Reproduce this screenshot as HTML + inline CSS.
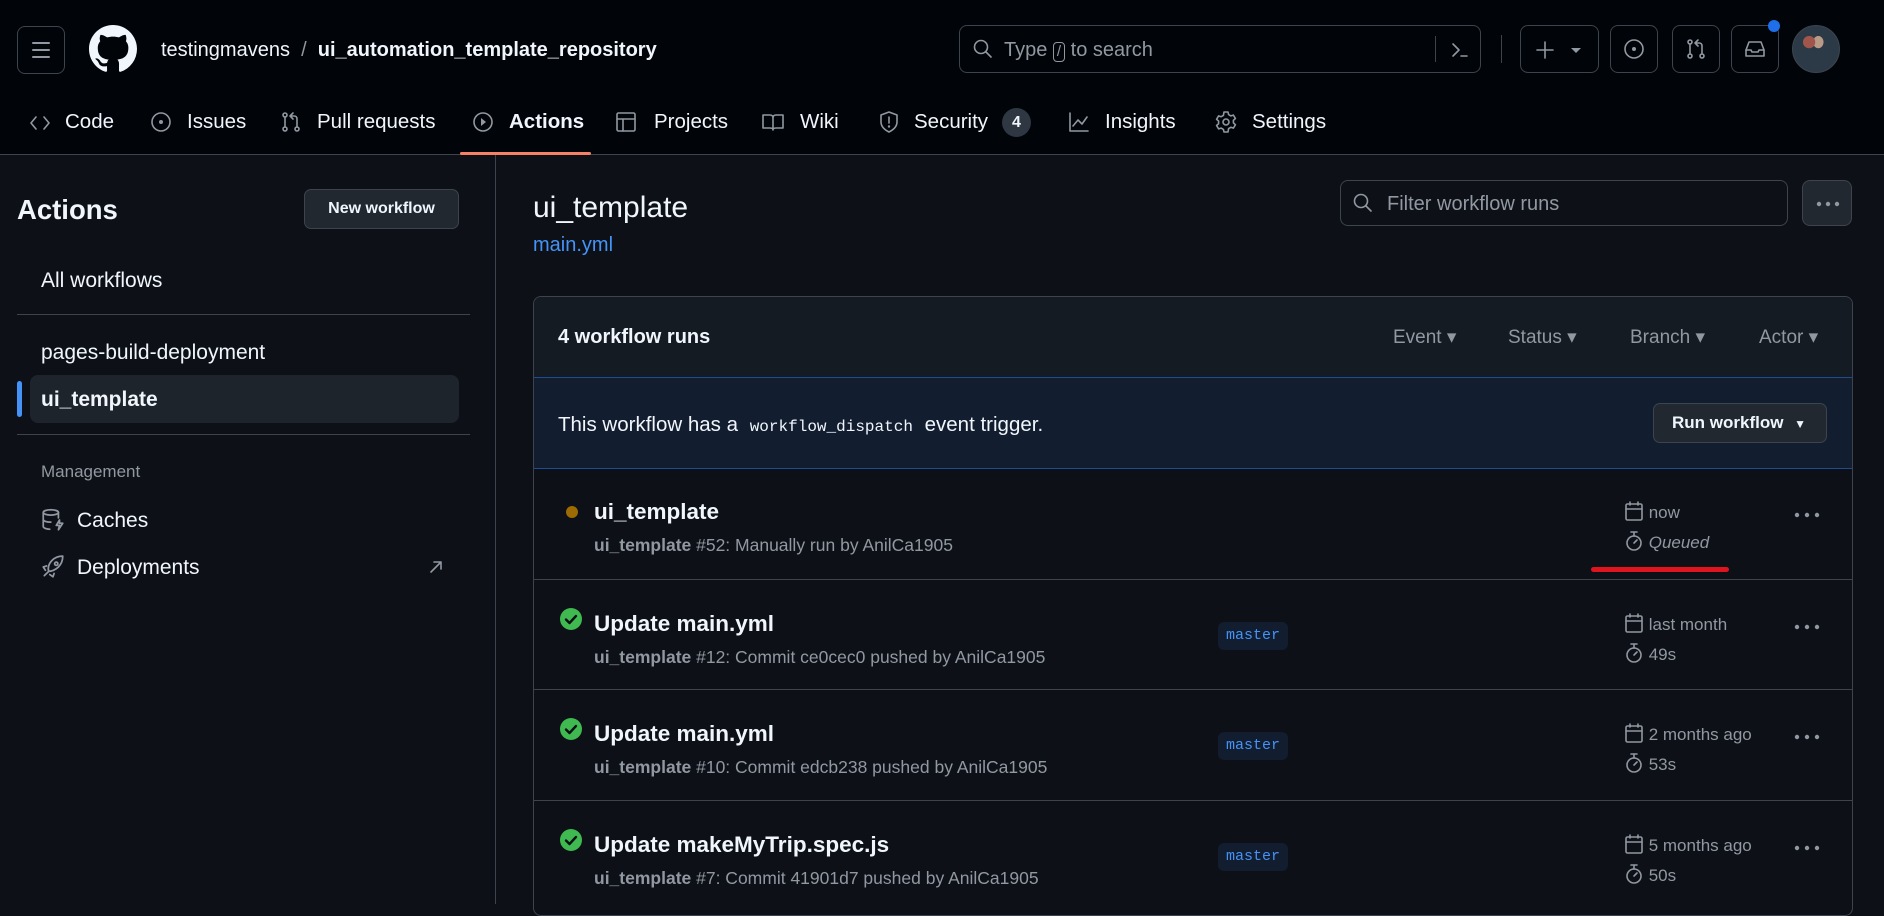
<!DOCTYPE html>
<html><head><meta charset="utf-8">
<style>
*{box-sizing:border-box;margin:0;padding:0}
body{width:1884px;height:904px;overflow:hidden;background:#0d1117;color:#f0f6fc;font-family:"Liberation Sans",sans-serif;font-size:17px;position:relative}
.abs{position:absolute}
.hdr{position:absolute;left:0;top:0;width:1884px;height:155px;background:#010409;border-bottom:1px solid #3d444d}
.btn{position:absolute;border:1px solid #3d444d;border-radius:8px}
svg{display:block}
.ic{fill:none;stroke:#9198a1;stroke-width:1.6;stroke-linecap:round;stroke-linejoin:round}
.nav{position:absolute;top:110px;font-size:20.5px;color:#f0f6fc;line-height:24px}
.mut{color:#9198a1}
.side{position:absolute;left:0;top:155px;width:496px;height:749px;border-right:1px solid #3d444d}
.box{position:absolute;left:533px;top:296px;width:1320px;height:620px;border:1px solid #3d444d;border-radius:8px;overflow:hidden}
.row{position:absolute;left:0;width:1320px;height:111px;border-top:1px solid #3d444d}
.t{position:absolute;left:60px;top:31px;font-size:22.5px;font-weight:bold}
.s{position:absolute;left:60px;top:67px;font-size:17.5px;color:#9198a1}
.master{position:absolute;left:684px;top:42px;height:28px;padding:0 8px;background:#121d2f;color:#4493f8;border-radius:6px;font-family:"Liberation Mono",monospace;font-size:15px;line-height:28px}
.meta{position:absolute;left:1090px;font-size:17px;color:#9198a1}
.dots{position:absolute;left:1260px;top:44px}
.filt{font-size:19px;color:#9198a1;position:absolute}
.sd{position:absolute;font-size:21px}
</style></head><body>
<div class="hdr"></div>
<div class="btn" style="left:17px;top:26px;width:48px;height:48px">
<svg width="46" height="46" viewBox="0 0 46 46"><path d="M15 16h16M15 23h16M15 30h16" stroke="#9198a1" stroke-width="2" stroke-linecap="round"/></svg></div>
<svg class="abs" style="left:89px;top:25px" width="48" height="48" viewBox="0 0 16 16"><path fill="#f0f6fc" d="M8 0C3.58 0 0 3.58 0 8c0 3.54 2.29 6.530 5.47 7.59.4.07.55-.17.55-.38 0-.19-.01-.82-.01-1.49-2.01.37-2.530-.49-2.690-.94-.09-.23-.48-.94-.82-1.13-.28-.15-.68-.52-.01-.53.63-.01 1.08.58 1.23.82.72 1.21 1.87.87 2.33.66.07-.52.28-.87.51-1.070-1.78-.2-3.64-.89-3.64-3.95 0-.87.31-1.59.82-2.15-.08-.2-.36-1.02.08-2.12 0 0 .67-.21 2.2.82.64-.18 1.32-.27 2-.27.68 0 1.36.09 2 .27 1.53-1.04 2.2-.82 2.2-.82.44 1.1.16 1.92.08 2.12.51.56.82 1.27.82 2.15 0 3.07-1.87 3.75-3.65 3.95.29.25.54.73.54 1.48 0 1.07-.01 1.93-.01 2.2 0 .21.15.46.55.38A8.013 8.013 0 0016 8c0-4.42-3.58-8-8-8z"/></svg>
<div class="abs" style="left:161px;top:38px;font-size:20px;line-height:24px">testingmavens <span class="mut">&nbsp;/&nbsp;</span> <b style="font-weight:600">ui_automation_template_repository</b></div>
<div class="btn" style="left:959px;top:25px;width:522px;height:48px">
<svg class="abs" style="left:12px;top:12px" width="22" height="22" viewBox="0 0 22 22"><circle cx="9" cy="9" r="6.5" class="ic" stroke-width="2"/><path d="M14 14l5 5" class="ic" stroke-width="2"/></svg>
<div class="abs mut" style="left:44px;top:13px;font-size:20px">Type <span style="display:inline-block;border:1px solid #9198a1;border-radius:4px;padding:0 3px;font-size:15px;line-height:18px">/</span> to search</div>
<div class="abs" style="left:475px;top:10px;width:1px;height:26px;background:#3d444d"></div>
<svg class="abs" style="left:488px;top:12px" width="24" height="24" viewBox="0 0 24 24"><path d="M5 6l6 6-6 6M13 18h6" class="ic" stroke-width="2"/></svg>
</div>
<div class="abs" style="left:1501px;top:35px;width:1px;height:28px;background:#3d444d"></div>
<div class="btn" style="left:1520px;top:25px;width:79px;height:48px">
<svg class="abs" style="left:12px;top:12px" width="60" height="24" viewBox="0 0 60 24"><path d="M12 4v16M4 12h16" class="ic" stroke-width="2"/><path d="M38 10h10l-5 5z" fill="#9198a1"/></svg></div>
<div class="btn" style="left:1610px;top:25px;width:48px;height:48px">
<svg class="abs" style="left:11px;top:11px" width="24" height="24" viewBox="0 0 24 24"><circle cx="12" cy="12" r="9" class="ic" stroke-width="2"/><circle cx="12" cy="12" r="2" fill="#9198a1"/></svg></div>
<div class="btn" style="left:1672px;top:25px;width:48px;height:48px">
<svg class="abs" style="left:11px;top:11px" width="24" height="24" viewBox="0 0 24 24"><g class="ic" stroke-width="2"><circle cx="6" cy="5" r="2"/><circle cx="6" cy="19" r="2"/><circle cx="18" cy="19" r="2"/><path d="M6 7v10M18 17V9c0-2-1-3-3-3h-3M14 3l-3 3 3 3"/></g></svg></div>
<div class="btn" style="left:1731px;top:25px;width:48px;height:48px">
<svg class="abs" style="left:11px;top:11px" width="24" height="24" viewBox="0 0 24 24"><g class="ic" stroke-width="2"><path d="M3 13l3-8h12l3 8v6H3z"/><path d="M3 13h5l1 2h6l1-2h5"/></g></svg></div>
<div class="abs" style="left:1768px;top:20px;width:12px;height:12px;border-radius:50%;background:#1f6feb"></div>
<div class="abs" style="left:1792px;top:25px;width:48px;height:48px;border-radius:50%;background:radial-gradient(circle at 35% 35%,#a0564a 0 14%,transparent 15%),radial-gradient(ellipse at 55% 35%,#b89a86 0 14%,#2c3a48 15% 100%);border:1px solid #3d444d"></div>

<svg class="abs" style="left:29px;top:112px" width="22" height="22" viewBox="0 0 22 22"><path d="M7 5l-5 6 5 6M15 5l5 6-5 6" class="ic"/></svg>
<div class="nav" style="left:65px">Code</div>
<svg class="abs" style="left:149px;top:110px" width="24" height="24" viewBox="0 0 24 24"><circle cx="12" cy="12" r="9" class="ic"/><circle cx="12" cy="12" r="2" fill="#9198a1"/></svg>
<div class="nav" style="left:187px">Issues</div>
<svg class="abs" style="left:279px;top:110px" width="24" height="24" viewBox="0 0 24 24"><g class="ic"><circle cx="6" cy="5" r="2"/><circle cx="6" cy="19" r="2"/><circle cx="18" cy="19" r="2"/><path d="M6 7v10M18 17V9c0-2-1-3-3-3h-3M14 3l-3 3 3 3"/></g></svg>
<div class="nav" style="left:317px">Pull requests</div>
<svg class="abs" style="left:471px;top:110px" width="24" height="24" viewBox="0 0 24 24"><circle cx="12" cy="12" r="9" class="ic"/><path d="M10 8l5 4-5 4z" fill="#9198a1"/></svg>
<div class="nav" style="left:509px;font-weight:bold">Actions</div>
<div class="abs" style="left:460px;top:152px;width:131px;height:3px;background:#f78166;border-radius:2px"></div>
<svg class="abs" style="left:614px;top:110px" width="24" height="24" viewBox="0 0 24 24"><g class="ic"><rect x="3" y="3" width="18" height="18" rx="1.5"/><path d="M3 9h18M9 9v12"/></g></svg>
<div class="nav" style="left:654px">Projects</div>
<svg class="abs" style="left:761px;top:110px" width="24" height="24" viewBox="0 0 24 24"><g class="ic"><path d="M2 5h7c2 0 3 1 3 3v12c0-1.5-1-2-3-2H2zM22 5h-7c-2 0-3 1-3 3v12c0-1.5 1-2 3-2h7z"/></g></svg>
<div class="nav" style="left:800px">Wiki</div>
<svg class="abs" style="left:877px;top:110px" width="24" height="24" viewBox="0 0 24 24"><g class="ic"><path d="M12 2l8 3v7c0 5-4 8-8 10-4-2-8-5-8-10V5z"/><path d="M12 7v6"/></g><circle cx="12" cy="16.5" r="1.2" fill="#9198a1"/></svg>
<div class="nav" style="left:914px">Security</div>
<div class="abs" style="left:1002px;top:108px;width:29px;height:29px;border-radius:15px;background:#2f3742;font-size:16px;text-align:center;line-height:29px;font-weight:bold">4</div>
<svg class="abs" style="left:1067px;top:110px" width="24" height="24" viewBox="0 0 24 24"><g class="ic"><path d="M3 3v18h18M6 16l5-6 4 4 5-7"/></g></svg>
<div class="nav" style="left:1105px">Insights</div>
<svg class="abs" style="left:1214px;top:110px" width="24" height="24" viewBox="0 0 24 24"><g class="ic"><circle cx="12" cy="12" r="3"/><path d="M10 2h4l.6 2.6 2.3 1.3 2.5-.8 2 3.4-2 1.8v2.6l2 1.8-2 3.4-2.5-.8-2.3 1.3L14 22h-4l-.6-2.6-2.3-1.3-2.5.8-2-3.4 2-1.8v-2.6l-2-1.8 2-3.4 2.5.8 2.3-1.3z"/></g></svg>
<div class="nav" style="left:1252px">Settings</div>

<div class="side"></div>
<div class="abs" style="left:17px;top:194px;font-size:27.5px;font-weight:bold">Actions</div>
<div class="btn" style="left:304px;top:189px;width:155px;height:40px;background:#212830;font-size:16px;font-weight:bold;text-align:center;line-height:38px;border-radius:7px">New workflow</div>
<div class="sd" style="left:41px;top:269px">All workflows</div>
<div class="abs" style="left:17px;top:314px;width:453px;height:1px;background:#3d444d"></div>
<div class="sd" style="left:41px;top:341px">pages-build-deployment</div>
<div class="abs" style="left:30px;top:375px;width:429px;height:48px;background:#1e242c;border-radius:8px"></div>
<div class="abs" style="left:17px;top:381px;width:5px;height:36px;background:#4493f8;border-radius:3px"></div>
<div class="sd" style="left:41px;top:388px;font-weight:bold">ui_template</div>
<div class="abs" style="left:17px;top:434px;width:453px;height:1px;background:#3d444d"></div>
<div class="abs mut" style="left:41px;top:462px;font-size:17px">Management</div>
<svg class="abs" style="left:40px;top:507px" width="26" height="26" viewBox="0 0 24 24"><g class="ic"><ellipse cx="10" cy="5" rx="7" ry="2.5"/><path d="M3 5v13c0 1.4 3 2.5 6 2.5M17 5v5M3 11.5c0 1.4 3 2.5 7 2.5"/><path d="M18 12l-3 5h3l-1 4 4-6h-3z"/></g></svg>
<div class="sd" style="left:77px;top:509px">Caches</div>
<svg class="abs" style="left:40px;top:554px" width="26" height="26" viewBox="0 0 24 24"><g class="ic"><path d="M8 16c-1-3 0-7 3-10 3-3 7-4 10-4 0 3-1 7-4 10-3 3-7 4-9 4z"/><path d="M8 16l-4 4M6 11l-3 1 2 3M13 18l-1 3-3-2"/><circle cx="15" cy="9" r="1.5"/></g></svg>
<div class="sd" style="left:77px;top:556px">Deployments</div>
<svg class="abs" style="left:427px;top:558px" width="18" height="18" viewBox="0 0 18 18"><path d="M4 14L14 4M7 4h7v7" class="ic" stroke-width="1.8"/></svg>

<div class="abs" style="left:533px;top:191px;font-size:30px">ui_template</div>
<div class="abs" style="left:533px;top:234px;font-size:20px;color:#4493f8">main.yml</div>
<div class="btn" style="left:1340px;top:180px;width:448px;height:46px;background:#0d1117">
<svg class="abs" style="left:11px;top:11px" width="22" height="22" viewBox="0 0 22 22"><circle cx="9" cy="9" r="6.5" class="ic" stroke-width="2"/><path d="M14 14l5 5" class="ic" stroke-width="2"/></svg>
<div class="abs mut" style="left:46px;top:12px;font-size:20px">Filter workflow runs</div></div>
<div class="btn" style="left:1802px;top:180px;width:50px;height:46px;background:#212830">
<svg class="abs" style="left:13px;top:20px" width="24" height="6"><circle cx="3" cy="3" r="2.2" fill="#9198a1"/><circle cx="12" cy="3" r="2.2" fill="#9198a1"/><circle cx="21" cy="3" r="2.2" fill="#9198a1"/></svg></div>

<div class="box">
<div class="abs" style="left:0;top:0;width:1320px;height:80px;background:#151b23"></div>
<div class="abs" style="left:24px;top:29px;font-size:20px;font-weight:bold">4 workflow runs</div>
<div class="filt" style="left:859px;top:29px">Event ▾</div>
<div class="filt" style="left:974px;top:29px">Status ▾</div>
<div class="filt" style="left:1096px;top:29px">Branch ▾</div>
<div class="filt" style="left:1225px;top:29px">Actor ▾</div>
<div class="abs" style="left:0;top:80px;width:1320px;height:92px;background:#121d2f;border-top:1px solid #1f4b8f;border-bottom:1px solid #1f4b8f"></div>
<div class="abs" style="left:24px;top:116px;font-size:20.5px">This workflow has a <span style="font-family:'Liberation Mono',monospace;font-size:16px;padding:0 6px">workflow_dispatch</span> event trigger.</div>
<div class="btn" style="left:1119px;top:106px;width:174px;height:40px;background:#212830;font-size:17px;font-weight:bold;line-height:38px;padding-left:18px;border-radius:7px">Run workflow <span style="font-size:12px;margin-left:6px">▼</span></div>

<div class="row" style="top:171px;border-top:none">
<div class="abs" style="left:32px;top:38px;width:12px;height:12px;border-radius:50%;background:#9e6a03"></div>
<div class="t">ui_template</div>
<div class="s"><b style="font-weight:600">ui_template</b> #52: Manually run by AnilCa1905</div>
<div class="meta" style="top:32px"><svg style="display:inline-block;vertical-align:-4px" width="20" height="22" viewBox="0 0 20 22"><g class="ic" stroke-width="1.8"><rect x="2" y="4" width="16" height="16" rx="1.5"/><path d="M2 9h16M6 2v3M14 2v3"/></g></svg> now</div>
<div class="meta" style="top:62px;font-style:italic"><svg style="display:inline-block;vertical-align:-4px" width="20" height="22" viewBox="0 0 20 22"><g class="ic" stroke-width="1.8"><circle cx="10" cy="13" r="7"/><path d="M7 2h6M10 2v4M10 13l3-3"/></g></svg> Queued</div>
<div class="abs" style="left:1057px;top:99px;width:138px;height:5px;border-radius:3px;background:#e0141e"></div>
<svg class="dots" width="26" height="6"><circle cx="3" cy="3" r="2.2" fill="#9198a1"/><circle cx="13" cy="3" r="2.2" fill="#9198a1"/><circle cx="23" cy="3" r="2.2" fill="#9198a1"/></svg>
</div>

<div class="row" style="top:282px">
<svg class="abs" style="left:26px;top:28px" width="22" height="22" viewBox="0 0 22 22"><circle cx="11" cy="11" r="11" fill="#3fb950"/><path d="M6 11.5l3.5 3.5L16 8" stroke="#0d1117" stroke-width="2.4" fill="none" stroke-linecap="round" stroke-linejoin="round"/></svg>
<div class="t">Update main.yml</div>
<div class="s"><b style="font-weight:600">ui_template</b> #12: Commit ce0cec0 pushed by AnilCa1905</div>
<div class="master">master</div>
<div class="meta" style="top:32px"><svg style="display:inline-block;vertical-align:-4px" width="20" height="22" viewBox="0 0 20 22"><g class="ic" stroke-width="1.8"><rect x="2" y="4" width="16" height="16" rx="1.5"/><path d="M2 9h16M6 2v3M14 2v3"/></g></svg> last month</div>
<div class="meta" style="top:62px"><svg style="display:inline-block;vertical-align:-4px" width="20" height="22" viewBox="0 0 20 22"><g class="ic" stroke-width="1.8"><circle cx="10" cy="13" r="7"/><path d="M7 2h6M10 2v4M10 13l3-3"/></g></svg> 49s</div>
<svg class="dots" width="26" height="6"><circle cx="3" cy="3" r="2.2" fill="#9198a1"/><circle cx="13" cy="3" r="2.2" fill="#9198a1"/><circle cx="23" cy="3" r="2.2" fill="#9198a1"/></svg>
</div>

<div class="row" style="top:392px">
<svg class="abs" style="left:26px;top:28px" width="22" height="22" viewBox="0 0 22 22"><circle cx="11" cy="11" r="11" fill="#3fb950"/><path d="M6 11.5l3.5 3.5L16 8" stroke="#0d1117" stroke-width="2.4" fill="none" stroke-linecap="round" stroke-linejoin="round"/></svg>
<div class="t">Update main.yml</div>
<div class="s"><b style="font-weight:600">ui_template</b> #10: Commit edcb238 pushed by AnilCa1905</div>
<div class="master">master</div>
<div class="meta" style="top:32px"><svg style="display:inline-block;vertical-align:-4px" width="20" height="22" viewBox="0 0 20 22"><g class="ic" stroke-width="1.8"><rect x="2" y="4" width="16" height="16" rx="1.5"/><path d="M2 9h16M6 2v3M14 2v3"/></g></svg> 2 months ago</div>
<div class="meta" style="top:62px"><svg style="display:inline-block;vertical-align:-4px" width="20" height="22" viewBox="0 0 20 22"><g class="ic" stroke-width="1.8"><circle cx="10" cy="13" r="7"/><path d="M7 2h6M10 2v4M10 13l3-3"/></g></svg> 53s</div>
<svg class="dots" width="26" height="6"><circle cx="3" cy="3" r="2.2" fill="#9198a1"/><circle cx="13" cy="3" r="2.2" fill="#9198a1"/><circle cx="23" cy="3" r="2.2" fill="#9198a1"/></svg>
</div>

<div class="row" style="top:503px">
<svg class="abs" style="left:26px;top:28px" width="22" height="22" viewBox="0 0 22 22"><circle cx="11" cy="11" r="11" fill="#3fb950"/><path d="M6 11.5l3.5 3.5L16 8" stroke="#0d1117" stroke-width="2.4" fill="none" stroke-linecap="round" stroke-linejoin="round"/></svg>
<div class="t">Update makeMyTrip.spec.js</div>
<div class="s"><b style="font-weight:600">ui_template</b> #7: Commit 41901d7 pushed by AnilCa1905</div>
<div class="master">master</div>
<div class="meta" style="top:32px"><svg style="display:inline-block;vertical-align:-4px" width="20" height="22" viewBox="0 0 20 22"><g class="ic" stroke-width="1.8"><rect x="2" y="4" width="16" height="16" rx="1.5"/><path d="M2 9h16M6 2v3M14 2v3"/></g></svg> 5 months ago</div>
<div class="meta" style="top:62px"><svg style="display:inline-block;vertical-align:-4px" width="20" height="22" viewBox="0 0 20 22"><g class="ic" stroke-width="1.8"><circle cx="10" cy="13" r="7"/><path d="M7 2h6M10 2v4M10 13l3-3"/></g></svg> 50s</div>
<svg class="dots" width="26" height="6"><circle cx="3" cy="3" r="2.2" fill="#9198a1"/><circle cx="13" cy="3" r="2.2" fill="#9198a1"/><circle cx="23" cy="3" r="2.2" fill="#9198a1"/></svg>
</div>
</div>
</body></html>
